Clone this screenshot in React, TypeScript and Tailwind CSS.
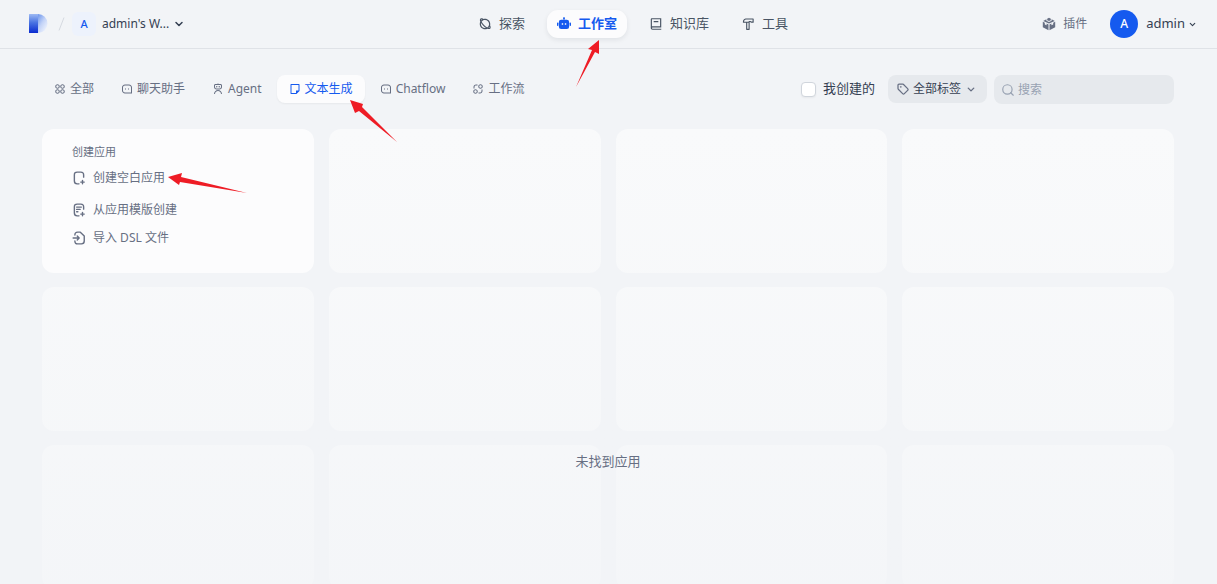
import { useState } from 'react';
import type { ReactNode } from 'react';
import clsx from 'clsx';
import { ChevronDown, Search, Tag } from 'lucide-react';
import {
  RiApps2Line,
  RiBook2Line,
  RiExchange2Line,
  RiFile4Line,
  RiMessage3Line,
  RiPlanetLine,
  RiRobot3Line,
} from 'react-icons/ri';

function RobotIcon({ className }: { className?: string }) {
  return (
    <svg viewBox="0 0 15 15" className={className} fill="currentColor" aria-hidden="true">
      <path d="M7 .6h1v2.600h-1Z" />
      <circle cx="7.500" cy="1.300" r=".9" />
      <path
        fillRule="evenodd"
        d="M4.500 2.900h6a2.500 2.500 0 0 1 2.500 2.500v5a2.500 2.500 0 0 1-2.500 2.500h-6A2.500 2.500 0 0 1 2 10.400v-5a2.500 2.500 0 0 1 2.500-2.500Zm.6 3.900v1.500h1.500V6.800Zm3.300 0v1.500h1.500V6.800Z"
      />
      <rect x="0" y="6" width="1.500" height="3.600" rx=".7" />
      <rect x="13.500" y="6" width="1.500" height="3.600" rx=".7" />
    </svg>
  );
}

function HammerIcon({ className }: { className?: string }) {
  return (
    <svg
      viewBox="0 0 15 15"
      className={className}
      fill="none"
      stroke="currentColor"
      strokeWidth="1.200"
      strokeLinejoin="round"
      aria-hidden="true"
    >
      <path d="M5 2.200h8v3.300h-1.700L9.900 4.800H8.700v8.400H6.100V5.600H2.600c0-1.900.7-3.100 2.400-3.400ZM6.100 5.600h2.600" />
    </svg>
  );
}

const navItems = [
  { label: '探索', icon: RiPlanetLine },
  { label: '工作室', icon: RobotIcon },
  { label: '知识库', icon: RiBook2Line },
  { label: '工具', icon: HammerIcon },
];

const tabs = [
  { label: '全部', icon: RiApps2Line },
  { label: '聊天助手', icon: RiMessage3Line },
  { label: 'Agent', icon: RiRobot3Line },
  { label: '文本生成', icon: RiFile4Line },
  { label: 'Chatflow', icon: RiMessage3Line },
  { label: '工作流', icon: RiExchange2Line },
];

function Logo() {
  return (
    <svg viewBox="0 0 20 20" className="h-5 w-5 shrink-0" aria-hidden="true">
      <defs>
        <linearGradient id="stem" x1="0" y1="0" x2="0" y2="1">
          <stop offset="0" stopColor="#9db9f3" />
          <stop offset="0.45" stopColor="#4a74e2" />
          <stop offset="1" stopColor="#0a2bd0" />
        </linearGradient>
        <linearGradient id="bowl" x1="0" y1="0" x2="0.8" y2="1">
          <stop offset="0" stopColor="#6c95ec" />
          <stop offset="0.5" stopColor="#c3d3f7" />
          <stop offset="1" stopColor="#f4f7fe" />
        </linearGradient>
      </defs>
      <path d="M10 0a9.500 9.500 0 0 1 0 19Z" fill="url(#bowl)" />
      <path d="M1.500 0H10v19H1.500A.5.500 0 0 1 1 18.500V.5A.5.500 0 0 1 1.500 0Z" fill="url(#stem)" />
    </svg>
  );
}

function PluginIcon() {
  return (
    <svg viewBox="0 0 14 14" className="h-[14px] w-[14px]" fill="currentColor" aria-hidden="true">
      <path d="M5.200 1.700 7 .8l1.800.9v1.500L7 4 5.200 3.200Z" />
      <path d="M4.400 2.300 1.200 3.900 7 6.600l5.800-2.700-3.200-1.600v1.500L7 5 4.400 3.800Z" />
      <path d="M.8 4.700v5.600l5.700 2.900V7.400L4.600 6.500v1.700L2.800 7.400V5.700Z" />
      <path d="M13.200 4.700v5.600l-5.700 2.900V7.400l1.900-.9v1.700l1.800-.8V5.700Z" />
    </svg>
  );
}

function FileIcon({ children }: { children: ReactNode }) {
  return (
    <svg
      viewBox="0 0 16 16"
      className="h-[14px] w-[14px] shrink-0"
      fill="none"
      stroke="currentColor"
      strokeWidth="1.600"
      strokeLinecap="round"
      strokeLinejoin="round"
      aria-hidden="true"
    >
      {children}
    </svg>
  );
}

const createItems = [
  {
    label: '创建空白应用',
    icon: (
      <FileIcon>
        <path d="M13.300 7V4.500c0-2.200-.9-3.200-3.200-3.200H5.900c-2.300 0-3.200 1-3.200 3.200v7c0 2.200.9 3.200 3.200 3.200H8M12 14.700v-4M10 12.700h4" />
      </FileIcon>
    ),
  },
  {
    label: '从应用模版创建',
    icon: (
      <FileIcon>
        <path d="M13.300 7V4.500c0-2.200-.9-3.200-3.200-3.200H5.900c-2.300 0-3.200 1-3.200 3.200v7c0 2.200.9 3.200 3.200 3.200H8M12 14.700v-4M10 12.700h4M5.300 4.700h5.400M5.300 7.300h4M5.300 10h1.400" />
      </FileIcon>
    ),
  },
  {
    label: '导入 DSL 文件',
    icon: (
      <FileIcon>
        <path d="M3.300 4.500c0-2.200.9-3.200 3.200-3.200h3l4.500 4.500v5.700c0 2.200-.9 3.200-3.200 3.200H6.500c-2.300 0-3.200-1-3.200-3.200M1.300 8H8M6 5.800 8.200 8 6 10.200" />
      </FileIcon>
    ),
  },
];

function Arrow({ points, viewBox, className }: { points: string; viewBox: string; className: string }) {
  return (
    <svg viewBox={viewBox} className={clsx('pointer-events-none absolute z-20', className)} aria-hidden="true">
      <polygon points={points} fill="#ee1c25" />
    </svg>
  );
}

function Header() {
  const [active, setActive] = useState('工作室');
  return (
    <header className="flex h-[49px] shrink-0 items-center justify-between border-b border-[#dfe2e7] pr-5 pl-7">
      <div className="flex w-[196px] items-center">
        <Logo />
        <svg viewBox="0 0 8 14" className="ml-[10px] h-[14px] w-2" aria-hidden="true">
          <path d="M1 13.500 6 .5" stroke="#d5d9e0" fill="none" />
        </svg>
        <button className="ml-[6px] flex items-center text-xs text-[#354052]">
          <span className="flex h-6 w-6 items-center justify-center rounded-md bg-[#edf2fc] text-[11px] font-medium text-[#155aef]">
            A
          </span>
          <span className="ml-[6px]">admin's W...</span>
          <ChevronDown className="ml-1 h-3 w-3" strokeWidth={3} />
        </button>
      </div>
      <nav className="flex items-center gap-3">
        {navItems.map(({ label, icon: Icon }) => (
          <div key={label} className="relative">
            <a
              href="#"
              onClick={() => setActive(label)}
              className={clsx(
                'flex h-7 items-center gap-[7px] rounded-[11px] px-[10px] text-[13px]',
                label === active
                  ? 'bg-[#fcfcfd] font-bold text-[#155aef] shadow-[0_2px_5px_rgba(16,24,40,0.08)]'
                  : 'text-[#495464]'
              )}
            >
              <Icon className="h-[14px] w-[14px]" />
              {label}
            </a>
            {label === '工作室' && (
              <Arrow
                viewBox="0 0 26 48"
                className="top-[30px] left-7 h-12 w-[26px]"
                points="24,0 13,9 17,10 1,47 20,12 24,14"
              />
            )}
          </div>
        ))}
      </nav>
      <div className="flex items-center">
        <a href="#" className="flex items-center gap-[7px] text-xs text-[#676f83]">
          <PluginIcon />
          插件
        </a>
        <button className="ml-[23px] flex items-center text-[13px] text-[#354052]">
          <span className="flex h-7 w-7 items-center justify-center rounded-full bg-[#155aef] text-xs font-medium text-white">
            A
          </span>
          <span className="ml-2">admin</span>
          <ChevronDown className="ml-[3px] h-[9px] w-[9px]" strokeWidth={3} />
        </button>
      </div>
    </header>
  );
}

function Toolbar() {
  const [active, setActive] = useState('文本生成');
  const [keyword, setKeyword] = useState('');
  return (
    <div className="flex items-start justify-between">
      <div className="flex gap-[3px]">
        {tabs.map(({ label, icon: Icon }) => (
          <div key={label} className="relative">
            <button
              onClick={() => setActive(label)}
              className={clsx(
                'flex h-7 items-center gap-1 rounded-lg px-3 text-xs',
                label === active ? 'bg-[#fcfcfd] text-[#155aef] shadow-xs' : 'text-[#676f83]'
              )}
            >
              <Icon className="h-3 w-3" />
              {label}
            </button>
            {label === '文本生成' && (
              <Arrow
                viewBox="0 0 48 44"
                className="top-6 left-[72px] h-11 w-12"
                points="1,1 14,5 13,8 48,43 10,12 6,14"
              />
            )}
          </div>
        ))}
      </div>
      <div className="flex items-start">
        <label className="flex h-7 items-center gap-[7px] text-[13px] text-[#354052]">
          <input
            type="checkbox"
            className="h-[15px] w-[15px] appearance-none rounded-sm border border-[#d0d5dc] bg-white shadow-xs checked:bg-[#155aef]"
          />
          我创建的
        </label>
        <button className="ml-[13px] flex h-7 items-center rounded-lg bg-[#e6e9ed] px-[9px] text-xs text-[#354052]">
          <Tag className="mr-1 h-3 w-3 text-[#676f83]" strokeWidth={2.5} />
          全部标签
          <ChevronDown className="mr-px ml-1 h-[11px] w-3 text-[#676f83]" strokeWidth={3} />
        </button>
        <div className="ml-[7px] flex h-[29px] w-[180px] items-center gap-[3px] rounded-lg bg-[#e6e9ed] px-[7px]">
          <Search className="h-[14px] w-[14px] text-[#98a2b2]" />
          <input
            type="text"
            aria-label="搜索"
            placeholder="搜索"
            value={keyword}
            onChange={(e) => setKeyword(e.target.value)}
            className="min-w-0 flex-1 bg-transparent text-xs text-[#354052] outline-none placeholder:text-[#98a2b2]"
          />
        </div>
      </div>
    </div>
  );
}

function CreateCard() {
  return (
    <div className="relative z-10 h-36 rounded-xl bg-[#fcfcfd] px-[30px] pt-[15px] text-[#676f83]">
      <h2 className="mb-1 text-[11px] leading-4">创建应用</h2>
      {createItems.map(({ label, icon }, i) => (
        <div key={label} className={clsx('relative w-fit', i === 0 && 'mb-1')}>
          <button className="flex h-7 items-center gap-[7px] text-xs">
            {icon}
            {label}
          </button>
          {i === 0 && (
            <Arrow
              viewBox="0 0 80 20"
              className="top-[9px] left-24 h-5 w-20"
              points="0,4 14,0 13,4 79,20 12,9 11,12"
            />
          )}
        </div>
      ))}
    </div>
  );
}

export default function App() {
  return (
    <div className="flex h-screen flex-col overflow-hidden bg-[#f2f4f7] font-['Noto_Sans','Noto_Sans_CJK_SC',sans-serif]">
      <Header />
      <main className="flex min-h-0 flex-1 flex-col pt-[26px] pr-[43px] pl-[42px]">
        <Toolbar />
        <div className="relative mt-[25px] min-h-0 flex-1">
          <div className="grid grid-cols-4 gap-x-[15px] gap-y-[14px]">
            <CreateCard />
            {Array.from({ length: 11 }, (_, i) => (
              <div key={i} className="h-36 rounded-xl bg-[#f9fafb]" />
            ))}
          </div>
          <div className="absolute inset-0 flex justify-center bg-linear-to-b from-transparent to-[#f2f4f7]/70 pt-[322px]">
            <p className="text-[13px] leading-5 text-[#676f83]">未找到应用</p>
          </div>
        </div>
      </main>
    </div>
  );
}
